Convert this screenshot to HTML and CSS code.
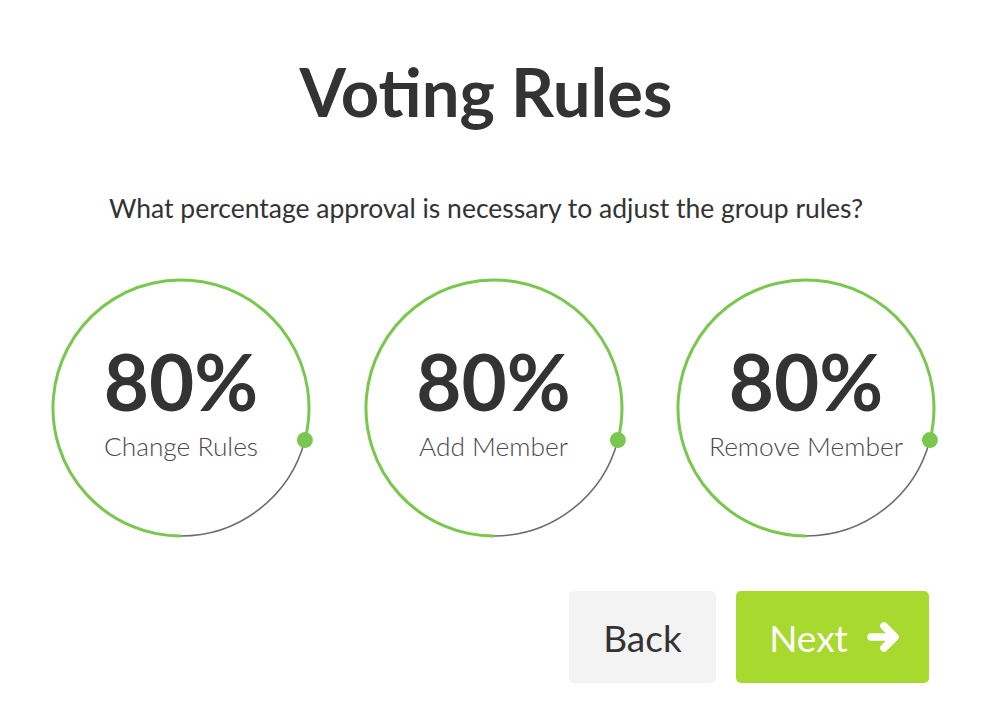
FILE: index.html
```html
<!DOCTYPE html>
<html>
<head>
<meta charset="utf-8">
<link rel="stylesheet" href="styles.css">
</head>
<body>
<main class="page">
  <h1 class="title">Voting Rules</h1>
  <p class="question">What percentage approval is necessary to adjust the group rules?</p>
  <div class="dials">
    <div class="dial">
      <svg class="ring" viewBox="0 0 264 264" width="264" height="264">
        <path class="arc-rest" d="M255.9 164.05 A128 128 0 0 1 132 260"/>
        <path class="arc-value" d="M132 260 A128 128 0 1 1 255.9 164.05"/>
        <circle class="knob" cx="255.9" cy="164.05" r="8"/>
      </svg>
      <div class="dial-text">
        <span class="value">80%</span>
        <span class="label">Change Rules</span>
      </div>
    </div>
    <div class="dial">
      <svg class="ring" viewBox="0 0 264 264" width="264" height="264">
        <path class="arc-rest" d="M255.9 164.05 A128 128 0 0 1 132 260"/>
        <path class="arc-value" d="M132 260 A128 128 0 1 1 255.9 164.05"/>
        <circle class="knob" cx="255.9" cy="164.05" r="8"/>
      </svg>
      <div class="dial-text">
        <span class="value">80%</span>
        <span class="label">Add Member</span>
      </div>
    </div>
    <div class="dial">
      <svg class="ring" viewBox="0 0 264 264" width="264" height="264">
        <path class="arc-rest" d="M255.9 164.05 A128 128 0 0 1 132 260"/>
        <path class="arc-value" d="M132 260 A128 128 0 1 1 255.9 164.05"/>
        <circle class="knob" cx="255.9" cy="164.05" r="8"/>
      </svg>
      <div class="dial-text">
        <span class="value">80%</span>
        <span class="label">Remove Member</span>
      </div>
    </div>
  </div>
  <div class="actions">
    <button class="btn btn-back">Back</button>
    <button class="btn btn-next"><span class="next-text">Next</span>
      <svg class="arrow" viewBox="0 0 34 34" width="34" height="34">
        <path d="M5 17 H27 M18 6 L29 17 L18 28"/>
      </svg>
    </button>
  </div>
</main>
</body>
</html>
```
FILE: styles.css
```css
html, body {
  margin: 0;
  padding: 0;
  background: #ffffff;
}
body {
  font-family: Lato, "Open Sans", sans-serif;
  color: #333333;
}
.page {
  width: 1000px;
  height: 726px;
  box-sizing: border-box;
  padding-top: 51px;
}
.title {
  margin: 0;
  text-align: center;
  font-size: 67px;
  font-weight: 700;
  line-height: 80px;
  padding-right: 28px;
  color: #333333;
}
.question {
  margin: 60px 0 0 0;
  text-align: center;
  font-size: 26.5px;
  line-height: 34px;
  padding-right: 28px;
  color: #333333;
}
.dials {
  display: flex;
  gap: 48.5px;
  padding-left: 49px;
  margin-top: 51px;
}
.dial {
  position: relative;
  width: 264px;
  height: 264px;
}
.ring {
  display: block;
}
.arc-value {
  fill: none;
  stroke: #7ac74f;
  stroke-width: 3;
}
.arc-rest {
  fill: none;
  stroke: #6b6b6b;
  stroke-width: 1.5;
}
.knob {
  fill: #7ac74f;
}
.dial-text {
  position: absolute;
  inset: 0;
  display: flex;
  flex-direction: column;
  align-items: center;
  padding-top: 65px;
}
.value {
  font-size: 78px;
  font-weight: 700;
  line-height: 80px;
  color: #333333;
}
.label {
  margin-top: 8px;
  font-size: 26.3px;
  font-weight: 300;
  line-height: 34px;
  color: #4a4a4a;
}
.actions {
  display: flex;
  justify-content: flex-end;
  gap: 20px;
  padding-right: 71px;
  margin-top: 51px;
}
.btn {
  height: 92px;
  border: none;
  border-radius: 5px;
  font-family: inherit;
  font-size: 37px;
  display: flex;
  align-items: center;
  justify-content: center;
}
.btn-back {
  width: 147px;
  background: #f3f3f3;
  color: #333333;
}
.btn-next {
  width: 193px;
  background: #a8d92e;
  color: #ffffff;
  gap: 18px;
  padding: 0 0 0 4px;
}
.arrow path {
  fill: none;
  stroke: #ffffff;
  stroke-width: 7.5;
  stroke-linecap: round;
  stroke-linejoin: round;
}
```
